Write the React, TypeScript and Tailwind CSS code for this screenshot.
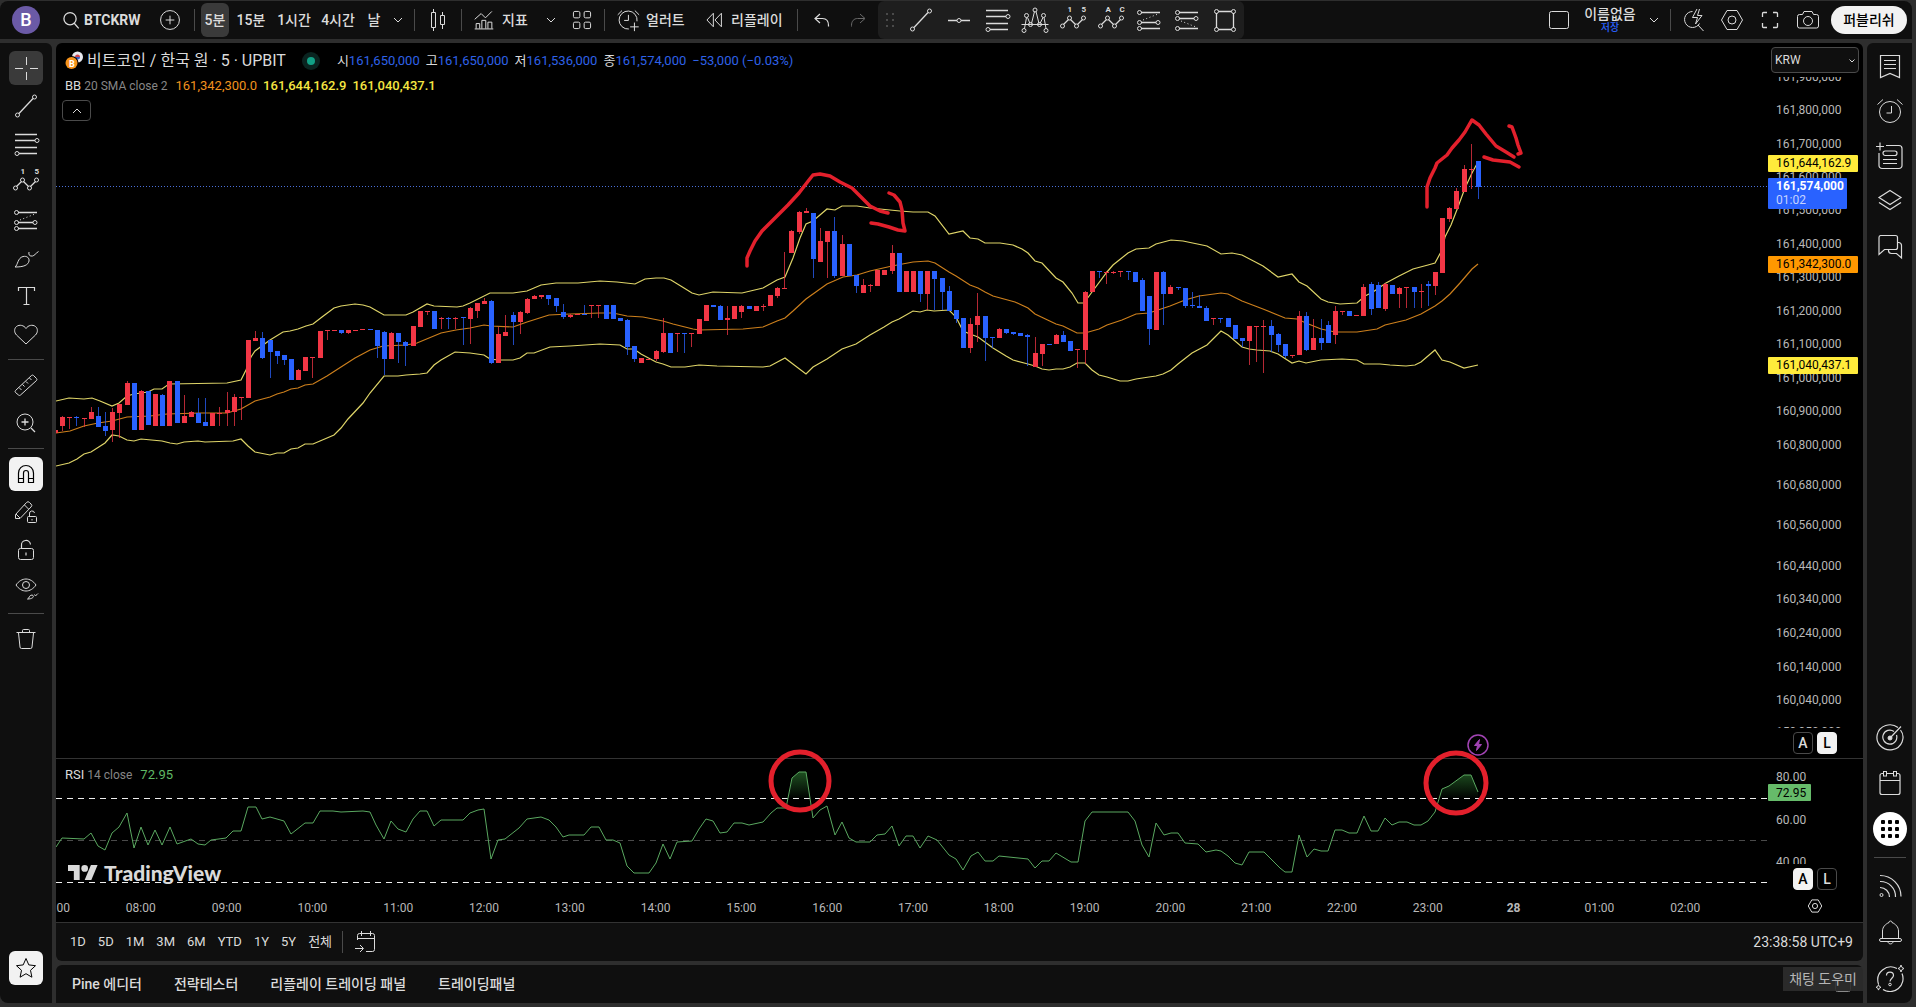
import React from "react";

type Candle = {
  up: boolean;
  top: number;
  bottom: number;
  high: number;
  low: number;
};

const FIRST_X = -1;
const STEP = 7.15;

// colour, body top, body bottom, high, low (pane coordinates)
const CANDLE_DATA = `
r387,390,387,390 r374,383,373,388 r374,375,374,386 b374,375,373,383 r375,376,375,384
r369,376,364,376 b373,384,364,384 b383,388,369,393 r369,387,365,399 r361,370,361,395
r340,362,338,362 b340,387,340,387 r348,387,347,387 b348,382,348,382 r351,383,351,383
b352,383,351,383 r338,383,338,383 b338,380,338,380 r373,380,352,380 r369,374,368,374
b370,380,355,380 b379,383,355,383 r370,383,370,383 r370,371,364,383 r367,370,349,383
r354,369,351,383 r354,355,354,377 r297,355,297,355 r295,298,288,298 b295,315,289,316
b297,309,297,335 b308,313,308,321 b312,317,312,322 b316,337,316,337 r327,337,326,337
r314,328,314,328 r314,315,314,335 r288,315,288,315 r287,288,287,297 r287,288,287,288
b287,290,287,291 r287,290,287,291 r287,288,287,288 r286,287,286,287 b286,287,286,287
b287,303,287,315 b289,316,288,332 r290,316,289,316 b290,299,290,320 b299,303,298,323
r283,303,283,303 r268,284,268,284 r268,269,268,272 b268,286,268,286 r275,276,274,286
b275,276,274,286 r275,276,274,286 b274,275,274,302 r265,276,264,301 r260,268,260,275
r258,261,255,261 b258,320,257,321 r291,320,284,320 r289,293,272,293 b272,279,269,302
r269,279,268,291 r256,270,255,271 r253,256,252,256 r252,254,252,256 b252,256,252,262
b255,263,255,269 b269,274,261,276 r272,274,271,275 r271,272,271,272 b271,272,262,272
r262,263,262,275 r262,263,262,275 b262,276,262,276 b262,276,262,276 b275,278,275,278
b277,304,276,312 b303,316,303,319 r315,320,315,320 r316,317,316,317 r308,316,307,318
r290,309,275,310 b290,310,290,310 r290,291,290,309 b290,291,290,310 r290,291,290,304
r276,291,276,291 r262,278,262,278 b262,264,262,264 b263,277,262,277 r275,277,263,292
r263,276,263,276 r263,269,262,275 b263,266,263,266 r263,268,263,268 r263,264,261,268
r252,263,252,263 r245,253,244,255 r245,246,209,246 r188,210,187,210 r169,189,168,191
r168,170,165,170 b170,216,170,235 r198,219,185,219 r188,199,188,235 b188,233,174,235
r201,233,192,233 b201,233,201,233 b232,243,232,250 r242,250,236,250 r242,243,241,249
r227,243,227,243 r227,232,227,232 r210,228,202,231 b210,249,210,249 r228,249,228,249
r228,249,228,249 b228,251,228,259 r228,251,228,267 b228,236,228,267 b235,249,235,267
b248,268,243,268 b267,276,267,280 b275,305,275,305 r281,305,275,310 r273,282,250,299
b273,295,273,318 b294,295,294,305 r286,295,285,295 b286,290,286,291 b289,291,289,292
b290,293,290,293 b292,294,291,323 r310,324,294,324 r301,311,301,323 b301,302,301,302
r292,301,291,301 b292,299,288,299 b298,308,298,308 r306,307,306,325 r249,307,248,321
r228,249,228,249 b228,229,228,235 r229,230,228,241 r229,230,228,231 r228,229,228,234
b228,229,228,237 b229,239,229,239 b237,268,235,268 b253,286,253,302 r229,287,229,287
b229,251,228,282 r244,251,242,251 b244,245,244,247 b245,263,245,265 b262,263,249,265
b263,265,252,265 b265,278,263,278 r275,276,275,282 b275,276,275,280 b275,284,275,284
b282,296,282,296 b295,298,295,304 r283,298,283,322 r283,284,283,319 r283,284,277,330
b283,292,277,309 b291,302,290,309 b301,313,301,315 r312,313,312,315 r273,312,268,312
b273,307,269,308 r295,307,276,307 b295,300,276,307 b282,300,278,300 r268,292,263,301
r268,269,268,272 b268,273,268,273 r272,273,272,273 r244,273,241,273 b241,266,239,272
b242,265,239,265 r241,266,240,268 b242,251,242,251 r245,251,244,265 r244,245,244,265
b244,249,244,265 r248,249,241,265 b241,243,238,263 r229,243,229,252 r175,230,175,230
r165,176,164,179 r148,166,145,166 r126,149,122,149 r126,127,101,146 b118,144,118,156`;

const candles: Candle[] = CANDLE_DATA.trim()
  .split(/\s+/)
  .map((item) => {
    const [top, bottom, high, low] = item.slice(1).split(",").map(Number);
    return { up: item[0] === "r", top, bottom, high, low };
  });

const upperBand =
  "0,358 13,355 28,356 36,355 44,358 56,363 63,360 71,353 78,351 92,349 98,346 106,346 113,341 171,340 185,337 190,327 195,314 199,308 214,297 227,289 234,288 242,286 250,283 257,281 266,274 278,265 285,263 299,261 307,262 314,264 321,268 328,272 350,272 357,269 371,261 378,263 401,264 407,263 414,260 434,250 457,250 471,248 485,242 500,240 522,240 544,238 561,239 579,241 589,236 600,235 608,235 615,237 628,245 636,250 643,252 657,249 686,250 707,245 721,237 729,234 737,215 744,195 750,181 757,178 771,166 779,167 786,163 801,163 814,165 844,168 857,169 872,169 879,173 893,191 907,188 914,195 922,196 929,200 944,200 957,202 966,206 972,210 979,218 986,220 1000,235 1007,239 1016,250 1022,260 1028,260 1036,249 1051,229 1057,222 1072,210 1080,206 1093,205 1100,201 1115,197 1127,198 1151,203 1165,211 1176,210 1186,212 1207,223 1222,234 1236,231 1243,239 1251,243 1265,256 1272,259 1284,261 1301,260 1309,253 1317,249 1330,240 1343,233 1357,226 1372,222 1379,220 1386,207 1389,194 1395,182 1402,164 1409,145 1416,130 1422,119";

const basisLine =
  "0,390 14,388 28,383 42,380 56,378 71,374 94,373 111,371 144,370 171,370 185,366 199,358 214,354 221,351 228,349 235,346 242,345 249,342 257,341 271,333 299,315 314,307 327,303 350,302 361,300 385,290 400,287 414,285 428,282 435,283 457,284 471,279 493,272 514,271 544,270 557,270 571,273 587,274 607,278 617,281 637,286 643,287 687,286 707,284 721,278 729,275 737,268 750,256 771,241 787,234 801,232 814,228 836,223 857,219 872,218 879,220 893,229 900,233 914,242 922,245 929,249 937,253 959,259 972,265 979,271 1000,281 1007,283 1021,290 1029,290 1043,286 1051,282 1066,277 1080,271 1093,270 1114,263 1129,257 1143,253 1158,251 1165,250 1172,251 1186,258 1207,266 1229,275 1241,276 1250,280 1265,286 1279,289 1301,289 1321,286 1329,282 1350,277 1365,271 1379,263 1386,258 1394,251 1404,240 1416,226 1422,221";

const lowerBand =
  "0,423 13,420 21,416 28,411 35,409 49,400 56,392 63,393 71,397 78,398 85,396 106,398 114,400 121,401 128,399 142,398 149,399 177,398 185,396 192,403 199,409 214,412 221,410 228,410 235,406 242,405 249,401 257,401 264,398 278,392 285,385 292,376 307,360 314,350 328,333 342,333 350,332 364,331 371,330 378,322 385,317 399,309 414,310 428,312 434,316 442,317 457,317 464,315 471,310 478,310 494,304 514,303 544,301 564,302 571,306 578,306 585,311 600,319 607,321 615,324 629,324 643,322 661,323 707,324 714,323 729,315 750,331 757,324 764,320 771,316 786,306 800,301 814,292 828,284 836,279 843,276 857,268 864,269 871,267 878,268 893,267 900,274 907,288 914,291 922,294 937,305 950,313 957,317 972,321 979,323 986,326 993,327 1000,326 1007,326 1014,324 1021,320 1029,320 1036,327 1043,332 1051,334 1064,338 1072,338 1080,336 1093,334 1100,333 1107,331 1115,327 1122,321 1136,310 1151,302 1157,296 1165,288 1172,292 1186,304 1193,306 1201,307 1214,308 1222,311 1236,320 1243,318 1250,320 1265,317 1286,316 1301,317 1308,321 1324,321 1334,322 1350,323 1359,322 1365,319 1379,307 1386,317 1394,319 1408,325 1422,322";

const rsiLine =
  "0,88 6,79 28,80 35,74 42,87 49,91 56,74 63,68 71,54 78,89 85,68 92,86 99,71 106,86 114,68 121,85 135,80 142,85 149,86 155,81 170,79 177,72 185,72 192,48 200,48 206,60 214,58 228,62 235,75 249,64 257,64 264,52 277,52 285,53 307,52 314,53 320,66 328,80 335,62 342,70 350,73 357,60 364,52 371,52 378,67 385,61 407,61 414,54 422,51 428,50 435,100 442,81 449,80 463,69 471,60 485,58 493,61 500,68 507,78 513,76 528,76 535,68 543,68 550,81 557,81 564,84 571,107 578,114 593,114 600,104 607,85 614,100 621,83 636,82 643,70 650,60 657,62 664,74 671,73 678,64 686,64 693,66 707,63 715,54 721,49 730,49 736,19 743,13 750,13 757,59 764,51 771,47 779,76 786,63 793,79 800,83 814,83 821,76 829,75 836,67 843,87 850,77 857,77 864,89 872,77 881,81 893,96 900,100 907,111 915,97 922,93 929,102 937,102 943,97 972,100 979,109 986,102 993,102 1000,94 1015,103 1022,103 1029,62 1036,53 1072,53 1079,62 1086,86 1093,98 1100,64 1108,76 1115,74 1122,74 1129,84 1142,85 1150,93 1160,91 1165,92 1172,97 1179,104 1186,106 1193,93 1208,93 1224,109 1229,113 1236,113 1243,76 1251,98 1258,90 1265,92 1272,92 1279,71 1286,71 1293,74 1301,74 1308,57 1315,72 1322,72 1329,59 1336,66 1343,63 1351,63 1358,66 1365,66 1372,62 1379,53 1386,30 1393,27 1408,16 1415,16 1422,33";

const priceLabels: [string, number][] = [
  ["161,800,000", 67],
  ["161,700,000", 101],
  ["161,600,000", 134],
  ["161,500,000", 167],
  ["161,400,000", 201],
  ["161,300,000", 234],
  ["161,200,000", 268],
  ["161,100,000", 301],
  ["161,000,000", 335],
  ["160,900,000", 368],
  ["160,800,000", 402],
  ["160,680,000", 442],
  ["160,560,000", 482],
  ["160,440,000", 523],
  ["160,340,000", 556],
  ["160,240,000", 590],
  ["160,140,000", 624],
  ["160,040,000", 657],
];

const timeLabels = [
  "07:00", "08:00", "09:00", "10:00", "11:00", "12:00", "13:00", "14:00", "15:00", "16:00",
  "17:00", "18:00", "19:00", "20:00", "21:00", "22:00", "23:00", "28", "01:00", "02:00",
];

type IconProps = { children: React.ReactNode; size?: number; className?: string };

const Icon = ({ children, size = 28, className = "" }: IconProps) => (
  <svg
    width={size}
    height={size}
    viewBox="0 0 28 28"
    fill="none"
    stroke="currentColor"
    strokeWidth={28 / size}
    className={`shrink-0 ${className}`}
    aria-hidden="true"
  >
    {children}
  </svg>
);

const Dots = ({ points }: { points: [number, number][] }) => (
  <>
    {points.map(([x, y]) => (
      <circle key={`${x}-${y}`} cx={x} cy={y} r={2} />
    ))}
  </>
);

const CrosshairIcon = () => (
  <Icon>
    <path d="M14.5 3v8M14.5 18v8M3 14.5h8M18 14.5h8" />
  </Icon>
);

const TrendIcon = () => (
  <Icon>
    <path d="M7 21.5l14-15" strokeWidth="1.3" />
    <Dots points={[[5.5, 23], [22.5, 5]]} />
  </Icon>
);

const HLineIcon = () => (
  <Icon>
    <path d="M3 14.5h9M16 14.5h9" strokeWidth="1.3" />
    <Dots points={[[14, 14.5]]} />
  </Icon>
);

const FibIcon = () => (
  <Icon>
    <path d="M3 4.5h22M3 10.5h20M3 17.5h22M7 23.5h18" strokeWidth="1.3" />
    <Dots points={[[25, 10.5], [5, 23.5]]} />
  </Icon>
);

const XabcdIcon = () => (
  <Icon>
    <path d="M.5 18.5h27M3.5 22.5l2-11M6.5 11.5l2.5 6M10.500 17.500l3-12M15 5.500l3 12M19 17.500l3-6M23 11.500l2 11" />
    <Dots points={[[3, 24.5], [5.5, 9.5], [9.5, 18.5], [14, 4], [18.5, 18.5], [22.5, 9.5], [25, 24.5]]} />
  </Icon>
);

const WaveIcon = ({ from, to }: { from: string; to: string }) => (
  <Icon>
    <path d="M4.500 18.500l5-5M11.500 13.500l5 5M18.500 18.500l5-5" strokeWidth="1.3" />
    <Dots points={[[3.5, 20], [10.5, 12], [17.5, 20], [24.5, 12]]} />
    <text x="8.5" y="6" className="fill-current stroke-none text-[8px] font-bold">{from}</text>
    <text x="22.5" y="6" className="fill-current stroke-none text-[8px] font-bold">{to}</text>
  </Icon>
);

const LongPositionIcon = () => (
  <Icon>
    <path d="M6 6.5h19M6 16.5h15M6 22.5h19" strokeWidth="1.3" />
    <path d="M8 14l15-6" strokeDasharray="1 2.5" />
    <Dots points={[[4.5, 6.5], [4.5, 16.5], [4.5, 22.5], [23, 16.5]]} />
  </Icon>
);

const ShortPositionIcon = () => (
  <Icon>
    <path d="M6 6.5h19M6 12.5h15M6 22.5h19" strokeWidth="1.3" />
    <path d="M8 15l15 6" strokeDasharray="1 2.5" />
    <Dots points={[[4.5, 6.5], [4.5, 12.5], [4.5, 22.5], [23, 12.5]]} />
  </Icon>
);

const RectangleIcon = () => (
  <Icon>
    <path d="M7.5 5.5h13M7.5 23.5h13M5.5 7v15M22.5 7v15" strokeWidth="1.3" />
    <Dots points={[[5.5, 5.5], [22.5, 5.5], [5.5, 23.5], [22.5, 23.5]]} />
  </Icon>
);

const BrushIcon = () => (
  <Icon>
    <path d="M3 23c3-2 2.5-9 8-10.5 4-.8 6.500 1.500 6 4.500-.8 4-5 6-14 6zM17 8c-.8 3 1 4.500 3.500 4 2-.4 3-2.500 6-4.500" />
  </Icon>
);

const TypeIcon = () => (
  <Icon>
    <path d="M6.5 9V5.5h16V9M14.5 5.500v17M11.500 22.500h6" strokeWidth="1.2" />
  </Icon>
);

const HeartIcon = () => (
  <Icon>
    <path d="M14 24L4.5 15C2 12.5 2 8.500 4.500 6.500c3-2.300 7.500-1.200 9.500 2 2-3.200 6.500-4.300 9.500-2 2.500 2 2.500 6 0 8.500z" />
  </Icon>
);

const RulerIcon = () => (
  <Icon>
    <path d="M3.5 19.5l16-15a1.500 1.500 0 0 1 2 0l3 3a1.500 1.500 0 0 1 0 2l-16 14.500a1.500 1.500 0 0 1-2 0l-3-2.500a1.500 1.500 0 0 1 0-2zM7 16.500l2.500 2.500M10.500 13.500l2 2M14 10.500l2 2M17.500 7l2 2" />
  </Icon>
);

const ZoomInIcon = () => (
  <Icon>
    <circle cx="13" cy="13" r="8" />
    <path d="M19 19l4 4M13 9.5v7M9.500 13h7" strokeWidth="1.3" />
  </Icon>
);

const MagnetIcon = () => (
  <Icon>
    <path d="M6.5 22.5V13a7.500 7.500 0 0 1 15 0v9.500h-5V13a2.500 2.500 0 0 0-5 0v9.500zM6.500 18.500h5M16.500 18.500h5" strokeWidth="1.2" />
  </Icon>
);

const PencilLockIcon = () => (
  <Icon>
    <path d="M3.500 16.500l11-12a2 2 0 0 1 3 0l1.500 1.500a2 2 0 0 1 0 3L8 20.500H3.500zM12.500 7l4 4M4 16l4 4" />
    <rect x="15.5" y="18.5" width="9" height="6" rx="1" />
    <path d="M17.500 18v-2a2.500 2.500 0 0 1 5-1M20 21v1.500" />
  </Icon>
);

const UnlockIcon = () => (
  <Icon>
    <rect x="6.5" y="12.5" width="15" height="11" rx="2" />
    <path d="M9.500 12.500v-3a4.500 4.500 0 0 1 9-1M14 16.500v3" strokeWidth="1.2" />
  </Icon>
);

const EyeBrushIcon = () => (
  <Icon>
    <path d="M4 11c5.500-8 14.500-8 20 0-5.500 8-14.500 8-20 0z" />
    <circle cx="14" cy="11" r="3.5" />
    <path d="M15.500 25c2-.5 1.500-4 4.500-4 2.500.5 2 4-4.500 4zM22.500 20.500c0 1.500 1.500 1.500 3.500-1" />
  </Icon>
);

const TrashIcon = () => (
  <Icon>
    <path d="M4.500 7.500h19M10.500 7V5.500a1 1 0 0 1 1-1h5a1 1 0 0 1 1 1V7M6.500 8l1.500 14a1.500 1.500 0 0 0 1.500 1.500h9a1.500 1.500 0 0 0 1.500-1.500l1.500-14" />
  </Icon>
);

const StarIcon = () => (
  <Icon>
    <path d="M14 4.5l2.800 6.400 6.700.8-5 4.600 1.400 6.900-5.900-3.500-5.900 3.500 1.400-6.900-5-4.600 6.700-.8z" />
  </Icon>
);

const AlarmIcon = () => (
  <Icon>
    <circle cx="14" cy="15" r="10.5" />
    <path d="M15.500 9v7h-5M1.500 7.500l5.500-5M26.500 7.500l-5.500-5" />
  </Icon>
);

const AddAlarmIcon = () => (
  <Icon size={24}>
    <path d="M15 24.500a10.500 10.500 0 1 1 9.500-9M14.500 8v6.500h-5M2 8l5-5M27 8l-5-5M21.500 17v10M16.500 22h10" />
  </Icon>
);

const ChevronDown = () => (
  <svg width="10" height="6" viewBox="0 0 10 6" fill="none" stroke="currentColor" aria-hidden="true">
    <path d="M1 1l4 4 4-4" />
  </svg>
);

const Hexagon = ({ size = 28 }: { size?: number }) => (
  <Icon size={size}>
    <path d="M9 4.500h10l5.500 9.500-5.500 9.500H9L3.500 14z" />
    <circle cx="14" cy="14" r="4" />
  </Icon>
);

const Divider = ({ className = "" }: { className?: string }) => (
  <div className={`h-[22px] w-px shrink-0 bg-[#4a4a4a] ${className}`} />
);

type IconButtonProps = { label: string; children: React.ReactNode; className?: string };

const IconButton = ({ label, children, className = "" }: IconButtonProps) => (
  <button
    type="button"
    aria-label={label}
    className={`flex shrink-0 items-center justify-center ${className}`}
  >
    {children}
  </button>
);

const favorites: [string, React.ReactNode][] = [
  ["추세선", <TrendIcon />],
  ["수평선", <HLineIcon />],
  ["피보나치", <FibIcon />],
  ["XABCD 패턴", <XabcdIcon />],
  ["엘리엇 임펄스", <WaveIcon from="1" to="5" />],
  ["엘리엇 조정", <WaveIcon from="A" to="C" />],
  ["롱 포지션", <LongPositionIcon />],
  ["숏 포지션", <ShortPositionIcon />],
  ["사각형", <RectangleIcon />],
];

const Header = () => (
  <header className="mt-px mr-1 flex h-[38px] shrink-0 items-center rounded-t-lg bg-[#0f0f0f] text-sm font-medium whitespace-nowrap">
    <button
      type="button"
      className="ml-3 size-7 shrink-0 rounded-full bg-[#6b5aa6] text-lg leading-7 font-medium text-white"
    >
      B
    </button>
    <button type="button" className="ml-[22px] flex w-20 shrink-0 items-center gap-1 font-bold">
      <Icon size={18}>
        <circle cx="12.5" cy="12" r="9.5" strokeWidth="2" />
        <path d="M19 19l7 8" strokeWidth="2" />
      </Icon>
      BTCKRW
    </button>
    <IconButton label="심볼 추가" className="ml-3 w-8">
      <Icon size={22}>
        <circle cx="14" cy="14" r="12" />
        <path d="M14 8.500v11M8.500 14h11" />
      </Icon>
    </IconButton>
    <Divider className="ml-2" />
    <nav className="ml-1.5 flex shrink-0 items-center">
      <button type="button" className="h-[34px] w-7 rounded-md bg-[#3a3a3a]">5분</button>
      <button type="button" className="w-11">15분</button>
      <button type="button" className="w-[42px]">1시간</button>
      <button type="button" className="w-[46px]">4시간</button>
      <button type="button" className="w-[26px]">날</button>
      <IconButton label="시간 간격" className="w-[22px]">
        <ChevronDown />
      </IconButton>
    </nav>
    <Divider className="ml-[5px]" />
    <IconButton label="차트 유형" className="w-[46px]">
      <Icon>
        <path d="M9.500 3v3M9.500 22v3M7.500 6.500h4v15h-4zM18.500 6v3M18.500 19v4M16.500 9.500h4v9h-4z" />
      </Icon>
    </IconButton>
    <Divider />
    <button type="button" className="flex w-[66px] shrink-0 items-center gap-2 pl-3">
      <Icon size={20}>
        <path d="M1 26.500h26M3 26v-7h5v7M11 26V14.500h5.500V26M19.500 26v-9H25v9M1 13l9-8 6 6 9-9" />
      </Icon>
      지표
    </button>
    <IconButton label="지표 템플릿" className="w-[46px]">
      <ChevronDown />
    </IconButton>
    <IconButton label="레이아웃" className="w-4">
      <Icon size={20}>
        <rect x="2" y="2" width="9" height="9" rx="2" />
        <rect x="17" y="2" width="9" height="9" rx="2" />
        <rect x="2" y="17" width="9" height="9" rx="2" />
        <rect x="17" y="17" width="9" height="9" rx="2" />
      </Icon>
    </IconButton>
    <Divider className="ml-3.5" />
    <button type="button" className="flex w-20 shrink-0 items-center gap-1.5 pl-[11px]">
      <AddAlarmIcon />
      얼러트
    </button>
    <button type="button" className="flex w-[98px] shrink-0 items-center gap-2 pl-5">
      <Icon size={18}>
        <path d="M13 3.500v21L3 14zM25.500 3.500v21L15.500 14z" />
      </Icon>
      리플레이
    </button>
    <Divider className="ml-3.5" />
    <IconButton label="실행 취소" className="w-[46px]">
      <Icon>
        <path d="M13 8l-5 4.500 5 4.500M8.500 12.500h7c3.500 0 6 2.500 6 7v1" strokeWidth="1.2" />
      </Icon>
    </IconButton>
    <IconButton label="다시 실행" className="w-[30px] text-[#6a6a6a]">
      <Icon>
        <path d="M15 8l5 4.500-5 4.500M19.500 12.500h-7c-3.500 0-6 2.500-6 7v1" />
      </Icon>
    </IconButton>
    <div className="ml-1 flex h-[38px] shrink-0 items-center rounded-md bg-[#1e1e1e]">
      <svg width="24" height="16" viewBox="0 0 24 16" className="fill-[#4a4a4a]" aria-hidden="true">
        <path d="M8 1h2v2H8zM14 1h2v2h-2zM8 7h2v2H8zM14 7h2v2h-2zM8 13h2v2H8zM14 13h2v2h-2z" />
      </svg>
      {favorites.map(([label, icon]) => (
        <IconButton key={label} label={label} className="w-[38px]">
          {icon}
        </IconButton>
      ))}
    </div>

    <div className="mr-[5px] ml-auto flex shrink-0 items-center">
      <IconButton label="레이아웃 설정" className="w-[38px]">
        <Icon>
          <rect x="4.5" y="5.5" width="19" height="17" rx="2" />
        </Icon>
      </IconButton>
      <button type="button" className="ml-1 flex w-14 flex-col items-center">
        <span className="leading-4">이름없음</span>
        <span className="text-[10px] leading-3 text-[#2962ff]">저장</span>
      </button>
      <IconButton label="레이아웃 관리" className="w-8">
        <ChevronDown />
      </IconButton>
      <Divider className="mr-1" />
      <IconButton label="빠른 찾기" className="w-[38px]">
        <Icon>
          <path d="M12.500 5.500a8 8 0 1 0 7 12M18 19l5.500 6M17 3l-4.500 8.500h5L15.500 18l6.500-8.500h-4.500L19.500 3" />
        </Icon>
      </IconButton>
      <IconButton label="설정" className="w-[38px]">
        <Hexagon />
      </IconButton>
      <IconButton label="전체 화면" className="w-[38px]">
        <Icon>
          <path d="M6.500 11V7.500a1 1 0 0 1 1-1H11M17 6.500h3.500a1 1 0 0 1 1 1V11M21.500 17v3.500a1 1 0 0 1-1 1H17M11 21.500H7.500a1 1 0 0 1-1-1V17" strokeWidth="1.3" />
        </Icon>
      </IconButton>
      <IconButton label="스냅샷" className="w-[38px]">
        <Icon>
          <path d="M10 5.500h8l1.500 3h3a2 2 0 0 1 2 2v9.500a2 2 0 0 1-2 2h-17a2 2 0 0 1-2-2v-9.500a2 2 0 0 1 2-2h3z" />
          <circle cx="14" cy="15" r="4.5" />
        </Icon>
      </IconButton>
      <button type="button" className="ml-1 h-7 w-[76px] rounded-full bg-[#f2f2f2] text-black">
        퍼블리쉬
      </button>
    </div>
  </header>
);

const drawingTools: [string, React.ReactNode][][] = [
  [
    ["크로스", <CrosshairIcon />],
    ["추세선", <TrendIcon />],
    ["피보나치", <FibIcon />],
    ["패턴", <WaveIcon from="1" to="5" />],
    ["포지션", <LongPositionIcon />],
    ["브러시", <BrushIcon />],
    ["텍스트", <TypeIcon />],
    ["아이콘", <HeartIcon />],
  ],
  [
    ["측정", <RulerIcon />],
    ["확대", <ZoomInIcon />],
  ],
  [
    ["자석 모드", <MagnetIcon />],
    ["그리기 모드 유지", <PencilLockIcon />],
    ["잠그기", <UnlockIcon />],
    ["숨기기", <EyeBrushIcon />],
  ],
  [["삭제", <TrashIcon />]],
];

const DrawingToolbar = () => (
  <aside className="flex w-[52px] shrink-0 flex-col items-center rounded-tr-md rounded-bl-lg bg-[#0f0f0f] pt-1.5">
    {drawingTools.map((group, i) => (
      <React.Fragment key={i}>
        {i > 0 && <div className="my-1.5 h-px w-9 bg-[#4a4a4a]" />}
        {group.map(([label, icon]) => (
          <div key={label} className="flex h-[38px] items-center">
            <IconButton
              label={label}
              className={`h-[34px] w-[34px] rounded-md ${
                label === "크로스" ? "bg-[#3a3a3a]" : label === "자석 모드" ? "bg-[#f2f2f2] text-black" : ""
              }`}
            >
              {icon}
            </IconButton>
          </div>
        ))}
      </React.Fragment>
    ))}
    <IconButton label="즐겨찾기" className="mt-auto mb-[18px] h-[34px] w-[34px] rounded-md bg-[#f2f2f2] text-black">
      <StarIcon />
    </IconButton>
  </aside>
);

const topWidgets: [string, React.ReactNode][] = [
  [
    "왓치리스트",
    <Icon>
      <path d="M4.500 3.500h19v22L14 21.500l-9.500 4zM8 8.500h12M8 12.500h12M8 16.500h12" strokeWidth="1.2" />
    </Icon>,
  ],
  ["얼러트", <AlarmIcon />],
  [
    "핫리스트",
    <Icon>
      <path d="M10 3.500h13a3 3 0 0 1 3 3v17a3 3 0 0 1-3 3H6a3 3 0 0 1-3-3V11M4 .5v8M0 4.500h8M7 17.500h14M7 21.500h14" strokeWidth="1.2" />
      <rect x="7" y="9" width="14" height="4.5" rx="2.2" strokeWidth="1.2" />
    </Icon>,
  ],
  [
    "오브젝트 트리",
    <Icon>
      <path d="M14 3.500l11 7-11 7-11-7zM3 15.500l11 7 11-7" strokeWidth="1.2" />
    </Icon>,
  ],
  [
    "챗",
    <Icon>
      <path d="M4.500 3.500h15a2 2 0 0 1 2 2v10a2 2 0 0 1-2 2H8.500l-5.500 5v-17a2 2 0 0 1 1.500-2zM22 10.500h1a3 3 0 0 1 2.500 3v12.500l-5-4.500h-5a3 3 0 0 1-3-3v-.5" strokeWidth="1.2" />
    </Icon>,
  ],
];

const RightSidebar = () => (
  <aside className="flex w-[45px] shrink-0 flex-col items-center rounded-tl-md rounded-br-lg bg-[#0f0f0f]">
    {topWidgets.map(([label, icon]) => (
      <IconButton key={label} label={label} className="h-[45px] w-full">
        {icon}
      </IconButton>
    ))}
    <IconButton label="스크리너" className="mt-auto h-[46px] w-full">
      <Icon>
        <path d="M22 4.500A13 12.500 0 1 0 24.500 7M18 8.500A7 7 0 1 0 20.500 12M14.500 14.500l10.500-11" strokeWidth="1.2" />
        <circle cx="14" cy="15" r="2" className="fill-current" />
      </Icon>
    </IconButton>
    <IconButton label="경제 캘린더" className="h-[46px] w-full">
      <Icon>
        <path d="M7 4.500H6a2 2 0 0 0-2 2v17a2 2 0 0 0 2 2h16a2 2 0 0 0 2-2v-17a2 2 0 0 0-2-2h-1M11 4.500h6M4.500 11.500h19" strokeWidth="1.2" />
        <rect x="7.5" y="2.5" width="3" height="4.5" />
        <rect x="17.5" y="2.5" width="3" height="4.5" />
      </Icon>
    </IconButton>
    <IconButton label="모든 도구" className="h-[46px] w-full">
      <span className="flex size-[34px] items-center justify-center rounded-full bg-white text-black">
        <svg width="18" height="18" viewBox="0 0 18 18" fill="currentColor" aria-hidden="true">
          {[0, 7, 14].map((y) => [0, 7, 14].map((x) => <rect key={`${x}${y}`} x={x} y={y} width="4" height="4" rx="1" />))}
        </svg>
      </span>
    </IconButton>
    <div className="my-[5px] h-px w-8 bg-[#4a4a4a]" />
    <IconButton label="스트림" className="h-[46px] w-full">
      <Icon>
        <path d="M4 3.500a21 21 0 0 1 21 21M4 9.500a15 15 0 0 1 15.500 15.500M4 15.500a9.500 9.500 0 0 1 9.500 9.500" strokeWidth="1.2" />
        <circle cx="5.5" cy="23" r="1.5" />
      </Icon>
    </IconButton>
    <IconButton label="알림" className="h-[46px] w-full">
      <Icon>
        <path d="M6.500 20.500V13c0-4 3-7 6.500-8.500a1.200 1.200 0 0 1 3 0c3.500 1.500 6.500 4.500 6.500 8.500v7.500M5 20.500h19a1 1 0 0 1 0 3H5a1 1 0 0 1 0-3zM12 24c.5 2.500 4.500 2.500 5 0" />
      </Icon>
    </IconButton>
    <IconButton label="도움말" className="mb-0.5 h-[46px] w-full">
      <Icon>
        <path d="M21 4.500A13 13 0 0 0 2.500 20M7 25.500a13 13 0 0 0 19-16" strokeWidth="1.2" />
        <path d="M10.500 11.500c0-4.500 7-4.500 7 0 0 2.500-3.500 3-3.500 6" strokeWidth="1.2" />
        <circle cx="14" cy="20.5" r="1.3" />
        <path d="M25 1l1 2.500 2 1-2 1-1 2.500-1-2.500-2-1 2-1zM2.500 20.500l.8 2 1.700.8-1.700.8-.8 2-.8-2L0 23.300l1.700-.8z" />
      </Icon>
    </IconButton>
  </aside>
);

const PricePane = () => (
  <svg className="size-full text-xs" aria-label="BTCKRW 5분 차트">
    <line x1="0" y1="143.5" x2="100%" y2="143.5" stroke="#4a6fd8" strokeDasharray="1 2" shapeRendering="crispEdges" />
    <g fill="none" strokeWidth="1.2">
      <polyline points={upperBand} stroke="#ded468" />
      <polyline points={lowerBand} stroke="#ded468" />
      <polyline points={basisLine} stroke="#cc7f1c" />
    </g>
    <g shapeRendering="crispEdges">
      {candles.map((c, i) => {
        const x = Math.round(FIRST_X + i * STEP);
        const color = c.up ? "#f23645" : "#2962ff";
        return (
          <g key={i} fill={color}>
            <rect x={x} y={c.high} width={1} height={c.low - c.high} opacity={0.75} />
            <rect x={x - 2} y={c.top} width={5} height={c.bottom - c.top} />
          </g>
        );
      })}
    </g>
    <g transform="translate(1422 702)" stroke="#a244b4" fill="none">
      <circle r="10" strokeWidth="1.5" />
      <path d="M1.5-5.500l-5 6h3l-1 5 5-6h-3z" fill="#a244b4" />
    </g>
  </svg>
);

const PriceAxis = () => (
  <svg className="size-full text-xs" aria-label="가격 축">
    <clipPath id="axis-clip">
      <rect y="34" width="96" height="651" />
    </clipPath>
    <g fill="#b8b8b8" clipPath="url(#axis-clip)">
      <text x="9" y="38">161,900,000</text>
      {priceLabels.map(([label, y]) => (
        <text key={label} x="9" y={y + 4}>{label}</text>
      ))}
      <text x="9" y="693">159,950,000</text>
    </g>
    <g fill="#000">
      <rect x="1" y="112" width="90" height="17" rx="1" fill="#ffeb3b" />
      <text x="9" y="124">161,644,162.9</text>
      <rect x="1" y="213" width="90" height="17" rx="1" fill="#ff9800" />
      <text x="9" y="225">161,342,300.0</text>
      <rect x="1" y="314" width="90" height="17" rx="1" fill="#ffeb3b" />
      <text x="9" y="326">161,040,437.1</text>
    </g>
    <rect x="1" y="135" width="79" height="31" rx="1" fill="#2962ff" />
    <text x="9" y="147" fill="#fff" className="font-bold">161,574,000</text>
    <text x="9" y="161" fill="#c5d3ff">01:02</text>
  </svg>
);

const RsiPane = () => (
  <svg className="size-full" aria-label="RSI">
    <defs>
      <linearGradient id="overbought" x1="0" y1="10" x2="0" y2="40" gradientUnits="userSpaceOnUse">
        <stop offset="0" stopColor="#2f7d33" stopOpacity="0.7" />
        <stop offset="1" stopColor="#2f7d33" stopOpacity="0" />
      </linearGradient>
    </defs>
    <path d="M732 39l4-20 7-6h7l4 26zM1383 39l3-9 7-3 15-11h7l7 17v6z" fill="url(#overbought)" />
    <g strokeDasharray="6 5" shapeRendering="crispEdges">
      <line x1="0" y1="39.5" x2="100%" y2="39.5" stroke="#eee" />
      <line x1="0" y1="81.5" x2="100%" y2="81.5" stroke="#4a4a4a" />
      <line x1="0" y1="123.5" x2="100%" y2="123.5" stroke="#eee" />
    </g>
    <polyline points={rsiLine} fill="none" stroke="#5aa860" />
  </svg>
);

const RsiAxis = () => (
  <svg className="size-full text-xs" aria-label="RSI 축">
    <clipPath id="rsi-clip">
      <rect width="96" height="105" />
    </clipPath>
    <g fill="#b8b8b8" clipPath="url(#rsi-clip)">
      <text x="9" y="22">80.00</text>
      <text x="9" y="65">60.00</text>
      <text x="9" y="107">40.00</text>
    </g>
    <rect x="1" y="25" width="43" height="17" rx="1" fill="#66bb6a" />
    <text x="9" y="38" fill="#000">72.95</text>
  </svg>
);

// Freehand notes drawn over both panes
const Annotations = () => (
  <svg
    className="pointer-events-none absolute inset-0 size-full"
    fill="none"
    stroke="#e3202c"
    strokeLinecap="round"
    strokeLinejoin="round"
    aria-hidden="true"
  >
    <g strokeWidth="3.5">
      <polyline points="691,223 691,215 694,208 699,198 706,188 716,178 732,162 743,150 753,137 757,132 764,131 774,133 784,139 796,145 805,154 814,163 824,168 832,170" />
      <polyline points="833,150 838,152 844,159 846,167 847,180 849,188 842,187 833,184 822,181 815,180" />
      <polyline points="1371,164 1371,144 1374,135 1379,125 1381,120 1391,112 1396,105 1403,97 1409,89 1413,82 1416,77 1423,82 1430,91 1440,103 1450,109 1458,114" />
      <polyline points="1453,83 1456,84 1460,95 1462,102 1465,110 1462,111" />
      <polyline points="1428,114 1437,117 1454,119 1463,124" />
    </g>
    <circle cx="744" cy="738" r="29" strokeWidth="5" />
    <circle cx="1400" cy="740" r="30" strokeWidth="5" />
  </svg>
);

const ScaleButtons = ({ active }: { active: "A" | "L" }) => (
  <div className="absolute right-[26px] flex gap-1 text-sm leading-5 font-medium first:bottom-1 last:bottom-0">
    {["A", "L"].map((name) => (
      <button
        key={name}
        type="button"
        className={`h-[22px] w-5 rounded border ${
          name === active ? "border-[#f2f2f2] bg-[#f2f2f2] text-black" : "border-[#4a4a4a] bg-black"
        }`}
      >
        {name}
      </button>
    ))}
  </div>
);

const quotes = [
  ["시", "161,650,000"],
  ["고", "161,650,000"],
  ["저", "161,536,000"],
  ["종", "161,574,000"],
];

const Legend = () => (
  <div className="absolute top-1.5 left-[9px] text-[13px]">
    <div className="flex h-6 items-center">
      <svg width="20" height="20" viewBox="0 0 20 20" aria-hidden="true">
        <circle cx="12.5" cy="6" r="5.5" fill="#e8e8ee" />
        <path d="M10 6a2.500 2.500 0 0 1 5 0z" fill="#d0424d" />
        <path d="M10 6a2.500 2.500 0 0 0 5 0z" fill="#3b5fc0" />
        <circle cx="6.5" cy="12" r="7" fill="#000" />
        <circle cx="6.5" cy="12" r="6" fill="#f7931a" />
        <text x="4" y="15.5" className="fill-white text-[9px] font-bold">B</text>
      </svg>
      <h1 className="ml-0.5 text-base leading-6">비트코인 / 한국 원 · 5 · UPBIT</h1>
      <span className="ml-4 flex size-[18px] items-center justify-center rounded-full bg-[#0a2420]">
        <span className="size-2 rounded-full bg-[#12a085]" />
      </span>
      <dl className="ml-[17px] flex gap-1.5">
        {quotes.map(([label, value]) => (
          <div key={label} className="flex">
            <dt>{label}</dt>
            <dd className="text-[#2f62e8]">{value}</dd>
          </div>
        ))}
      </dl>
      <span className="ml-1.5 text-[#2f62e8]">−53,000 (−0.03%)</span>
    </div>
    <div className="flex h-6 items-center pt-0.5">
      <span>BB</span>
      <span className="ml-[3px] text-xs text-[#868686]">20 SMA close 2</span>
      <span className="ml-2 text-[#f0921e]">161,342,300.0</span>
      <span className="ml-1.5 font-medium text-[#f5e642]">161,644,162.9</span>
      <span className="ml-1.5 font-medium text-[#f5e642]">161,040,437.1</span>
    </div>
    <button
      type="button"
      aria-label="범례 접기"
      className="mt-[3px] -ml-[3px] flex h-[21px] w-[29px] items-center justify-center rounded-sm border border-[#4a4a4a]"
    >
      <span className="rotate-180">
        <ChevronDown />
      </span>
    </button>
  </div>
);

const Chart = () => (
  <section className="relative flex min-h-0 flex-1 flex-col overflow-hidden rounded-t-md bg-black">
    <div className="flex min-h-0 flex-1">
      <div className="relative min-w-0 flex-1">
        <PricePane />
        <Legend />
      </div>
      <div className="relative w-24 shrink-0">
        <ScaleButtons active="L" />
        <PriceAxis />
        <div className="absolute top-1 right-1 w-[88px]">
          <select
            aria-label="통화"
            className="h-[26px] w-full appearance-none rounded border border-[#4a4a4a] bg-[#0f0f0f] pl-[3px] text-xs"
          >
            <option>KRW</option>
          </select>
          <svg width="6" height="4" viewBox="0 0 6 4" fill="none" stroke="currentColor" className="pointer-events-none absolute top-3 right-1" aria-hidden="true">
            <path d="M.5.5L3 3 5.500.5" />
          </svg>
        </div>
      </div>
    </div>
    <div className="flex h-[132px] shrink-0 border-t border-[#333]">
      <div className="relative min-w-0 flex-1">
        <RsiPane />
        <div className="absolute top-1.5 left-[9px] flex text-[13px] leading-5">
          <span>RSI</span>
          <span className="ml-[3px] text-xs leading-5 text-[#868686]">14 close</span>
          <span className="ml-2 text-[#5fb865]">72.95</span>
        </div>
        <a href="#tradingview" className="absolute bottom-px left-3 flex items-center gap-1.5 text-[#dadada]">
          <svg width="30" height="16" viewBox="0 0 36 19" fill="currentColor" aria-hidden="true">
            <path d="M14 18H7V7H0V0h14z" />
            <path d="M28 18h-8l7.500-18h8z" />
            <circle cx="20" cy="4" r="4" />
          </svg>
          <span className="font-[family-name:Lato] text-[21px] leading-8 font-black">TradingView</span>
        </a>
      </div>
      <div className="relative w-24 shrink-0">
        <RsiAxis />
        <ScaleButtons active="A" />
      </div>
    </div>
    <div className="flex h-8 shrink-0">
      <svg className="h-full min-w-0 flex-1 text-xs" fill="#b8b8b8" textAnchor="middle" aria-label="시간 축">
        {timeLabels.map((label, i) => (
          <text key={label} x={-1 + i * 85.8} y="22" className={label === "28" ? "font-bold" : ""}>
            {label}
          </text>
        ))}
      </svg>
      <div className="flex w-24 shrink-0 items-center justify-center">
        <IconButton label="시간 축 설정">
          <Hexagon size={18} />
        </IconButton>
      </div>
    </div>
    <Annotations />
  </section>
);

const ranges = ["1D", "5D", "1M", "3M", "6M", "YTD", "1Y", "5Y", "전체"];
const panels = ["Pine 에디터", "전략테스터", "리플레이 트레이딩 패널", "트레이딩패널"];

const RangeBar = () => (
  <div className="flex h-[39px] shrink-0 items-center rounded-b-md border-t border-[#333] bg-[#0f0f0f] px-3.5 text-[13px]">
    <div className="flex gap-3">
      {ranges.map((range) => (
        <button key={range} type="button">{range}</button>
      ))}
    </div>
    <Divider className="ml-2.5" />
    <IconButton label="날짜로 이동" className="ml-2">
      <Icon>
        <path d="M6.500 12V7.500a2 2 0 0 1 2-2h13a2 2 0 0 1 2 2v14a2 2 0 0 1-2 2H15M6.500 10.500h17M10.500 3v5M19.500 3v5M4 20.500h8M9 17l3.500 3.500L9 24" />
      </Icon>
    </IconButton>
    <button type="button" className="-mr-1 ml-auto text-sm">23:38:58 UTC+9</button>
  </div>
);

const BottomPanel = () => (
  <div className="relative mt-1 flex h-[38px] shrink-0 items-center rounded-t-md bg-[#0f0f0f] pl-4 text-sm font-medium">
    <div className="flex gap-8">
      {panels.map((panel) => (
        <button key={panel} type="button">{panel}</button>
      ))}
    </div>
    <div className="ml-auto flex items-center gap-5 pr-3 text-[#8a8a8a]">
      <IconButton label="패널 열기" className="rotate-180">
        <ChevronDown />
      </IconButton>
      <IconButton label="패널 최대화">
        <svg width="16" height="16" viewBox="0 0 16 16" fill="none" stroke="currentColor" aria-hidden="true">
          <rect x=".5" y=".5" width="15" height="15" rx="2" />
        </svg>
      </IconButton>
    </div>
    <div role="tooltip" className="absolute top-0.5 right-0 bg-[#2e2e2e]/90 px-1.5 leading-6 font-normal text-[#b5b5b5]">
      채팅 도우미
    </div>
  </div>
);

const App = () => {
  return (
    <main className="flex h-screen w-full flex-col overflow-hidden bg-[#2e2e2e] pb-1 font-[family-name:Roboto,'Noto_Sans_CJK_KR',sans-serif] text-[#dbdbdb]">
      <Header />
      <div className="mt-1 mr-1 flex min-h-0 flex-1 gap-1">
        <DrawingToolbar />
        <div className="flex min-w-0 flex-1 flex-col">
          <Chart />
          <RangeBar />
          <BottomPanel />
        </div>
        <RightSidebar />
      </div>
    </main>
  );
};

export default App;
